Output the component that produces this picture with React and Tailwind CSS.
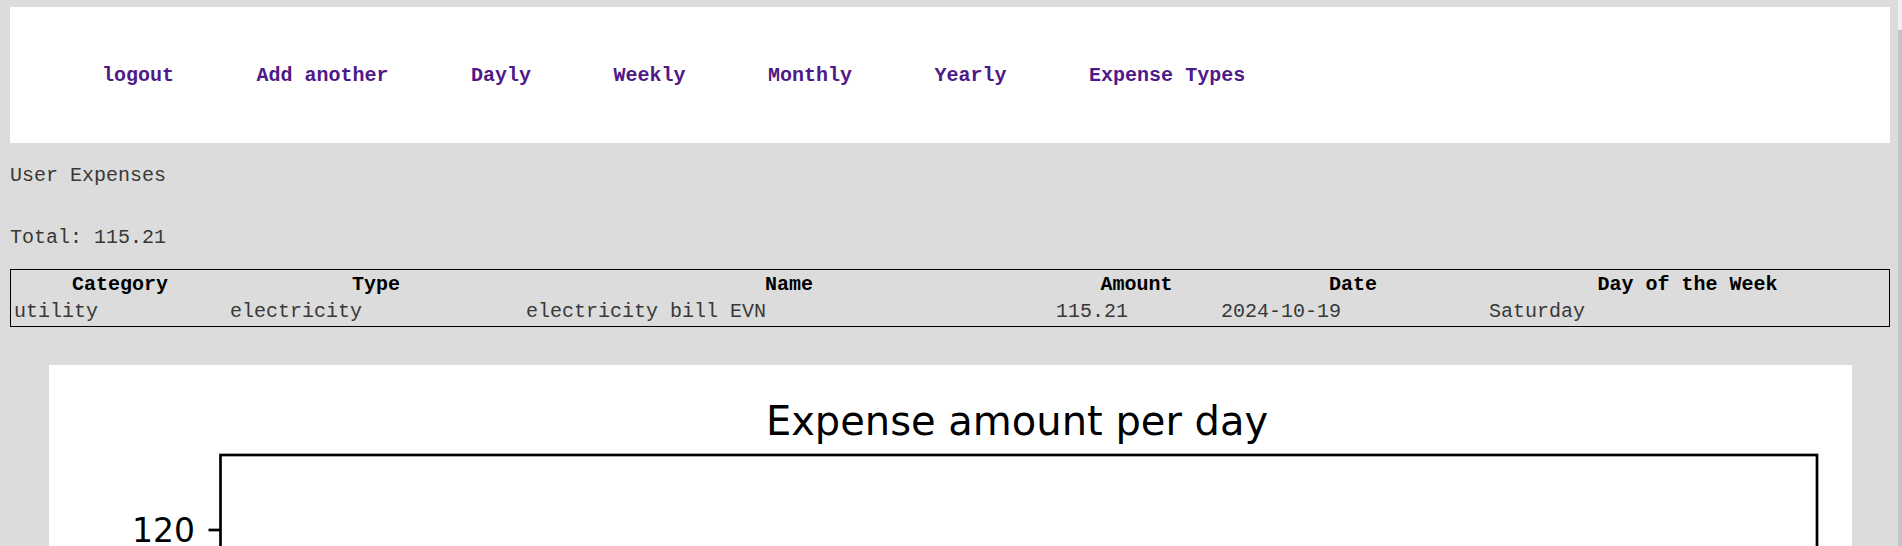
import React from "react";

const links = ["logout", "Add another", "Dayly", "Weekly", "Monthly", "Yearly", "Expense Types"];

const headers = ["Category", "Type", "Name", "Amount", "Date", "Day of the Week"];
const rows = [["utility", "electricity", "electricity bill EVN", "115.21", "2024-10-19", "Saturday"]];

const Chart = () => {
    return (
        <svg width="1803" height="600" viewBox="0 0 1803 600" className="block">
            <text
                x="968"
                y="70"
                textAnchor="middle"
                fontFamily="'DejaVu Sans', sans-serif"
                fontSize="40"
                fill="#000"
            >
                Expense amount per day
            </text>
            {/* axes frame */}
            <rect x="171.5" y="90" width="1596.5" height="600" fill="none" stroke="#000" strokeWidth="2.7" />
            {/* y tick */}
            <line x1="159.5" y1="165" x2="171.5" y2="165" stroke="#000" strokeWidth="2.7" />
            <text
                x="146"
                y="177"
                textAnchor="end"
                fontFamily="'DejaVu Sans', sans-serif"
                fontSize="33"
                fill="#000"
            >
                120
            </text>
        </svg>
    );
};

export default function App() {
    return (
        <div className="relative h-[546px] w-full overflow-hidden bg-[#dcdcdc] font-['Liberation_Mono',monospace] text-[20px] leading-[23px]">
            <div className="pl-[10px] pr-[12px] pt-[7px]">
                {/* nav */}
                <nav className="flex h-[136px] items-center gap-[82.5px] bg-white pl-[92px]">
                    {links.map((l) => (
                        <a key={l} href="#" className="font-bold text-[#4f1a87] whitespace-pre">
                            {l}
                        </a>
                    ))}
                </nav>

                <p className="mt-[21px] text-[#383838]">User Expenses</p>
                <p className="mt-[39px] text-[#383838]">Total: 115.21</p>

                {/* table */}
                <div className="mt-[20px] grid grid-cols-[214px_294px_528px_163px_266px_1fr] gap-[2px] border border-black p-[2px]">
                    {headers.map((h) => (
                        <div key={h} className="px-[1px] py-[1px] text-center font-bold text-black whitespace-pre">
                            {h}
                        </div>
                    ))}
                    {rows.map((r) =>
                        r.map((c, i) => (
                            <div key={i} className="px-[1px] py-[1px] text-[#383838] whitespace-pre">
                                {c}
                            </div>
                        ))
                    )}
                </div>

                {/* chart image */}
                <div className="mx-auto mt-[38px] w-[1803px] bg-white">
                    <Chart />
                </div>
            </div>

            {/* page scrollbar */}
            <div className="absolute right-0 top-0 flex h-full w-[4px] flex-col">
                <div className="h-[30px] bg-[#efefef]"></div>
                <div className="flex-1 bg-[#c4c4c4]"></div>
            </div>
        </div>
    );
}
